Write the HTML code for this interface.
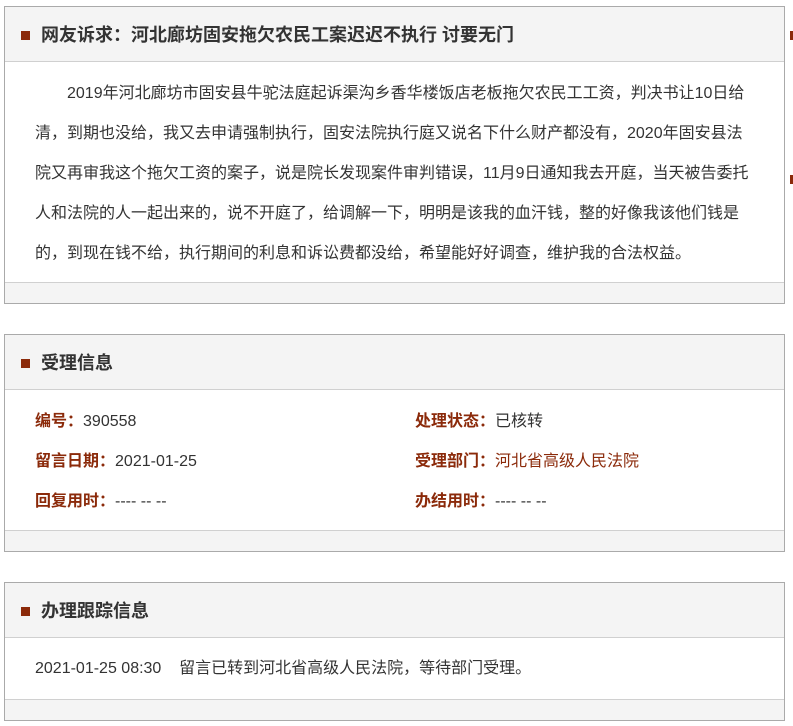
<!DOCTYPE html>
<html><head><meta charset="utf-8"><style>
body{margin:0;background:#fff;font-family:"Liberation Sans","Noto Sans CJK SC",sans-serif;color:#333;width:793px;height:726px;overflow:hidden;position:relative}
.box{position:absolute;left:4px;width:779px;border:1px solid #aaa;background:#f4f4f4}
.hd{height:54px;border-bottom:1px solid #d0d0d0;position:relative;font-size:18px;font-weight:bold;line-height:56px;padding-left:36px;color:#333}
.hd:before{content:"";position:absolute;left:16px;top:24px;width:9px;height:9px;background:#8b2a0a}
.bd{background:#fff;border-bottom:1px solid #d0d0d0}
.p{padding:12px 30px 12px 30px;font-size:16px;line-height:40px;text-indent:32px}
.info{padding:10px 30px;font-size:16px;line-height:40px;position:relative;height:120px}
.info div{position:absolute}
.l{color:#8b2a0a;font-weight:bold}
.red{color:#8b2a0a}
.mk{position:absolute;left:790px;width:3px;height:9px;background:#8b2a0a}
</style></head><body>
<div class="box" style="top:6px;height:296px">
<div class="hd">网友诉求：河北廊坊固安拖欠农民工案迟迟不执行 讨要无门</div>
<div class="bd" style="height:220px"><div class="p">2019年河北廊坊市固安县牛驼法庭起诉渠沟乡香华楼饭店老板拖欠农民工工资，判决书让10日给清，到期也没给，我又去申请强制执行，固安法院执行庭又说名下什么财产都没有，2020年固安县法院又再审我这个拖欠工资的案子，说是院长发现案件审判错误，11月9日通知我去开庭，当天被告委托人和法院的人一起出来的，说不开庭了，给调解一下，明明是该我的血汗钱，整的好像我该他们钱是的，到现在钱不给，执行期间的利息和诉讼费都没给，希望能好好调查，维护我的合法权益。</div></div>
</div>
<div class="mk" style="top:31px"></div>
<div class="mk" style="top:175px"></div>
<div class="box" style="top:334px;height:216px">
<div class="hd">受理信息</div>
<div class="bd" style="height:140px"><div class="info">
<div style="left:30px;top:12px"><span class="l">编号：</span>390558</div>
<div style="left:30px;top:52px"><span class="l">留言日期：</span>2021-01-25</div>
<div style="left:30px;top:92px"><span class="l">回复用时：</span>---- -- --</div>
<div style="left:410px;top:12px"><span class="l">处理状态：</span>已核转</div>
<div style="left:410px;top:52px"><span class="l">受理部门：</span><span class="red">河北省高级人民法院</span></div>
<div style="left:410px;top:92px"><span class="l">办结用时：</span>---- -- --</div>
</div></div>
</div>
<div class="box" style="top:582px;height:137px">
<div class="hd">办理跟踪信息</div>
<div class="bd" style="height:61px;font-size:16px;line-height:61px;padding-left:30px">2021-01-25 08:30&nbsp;&nbsp;&nbsp;&nbsp;留言已转到河北省高级人民法院，等待部门受理。</div>
</div>
</body></html>
